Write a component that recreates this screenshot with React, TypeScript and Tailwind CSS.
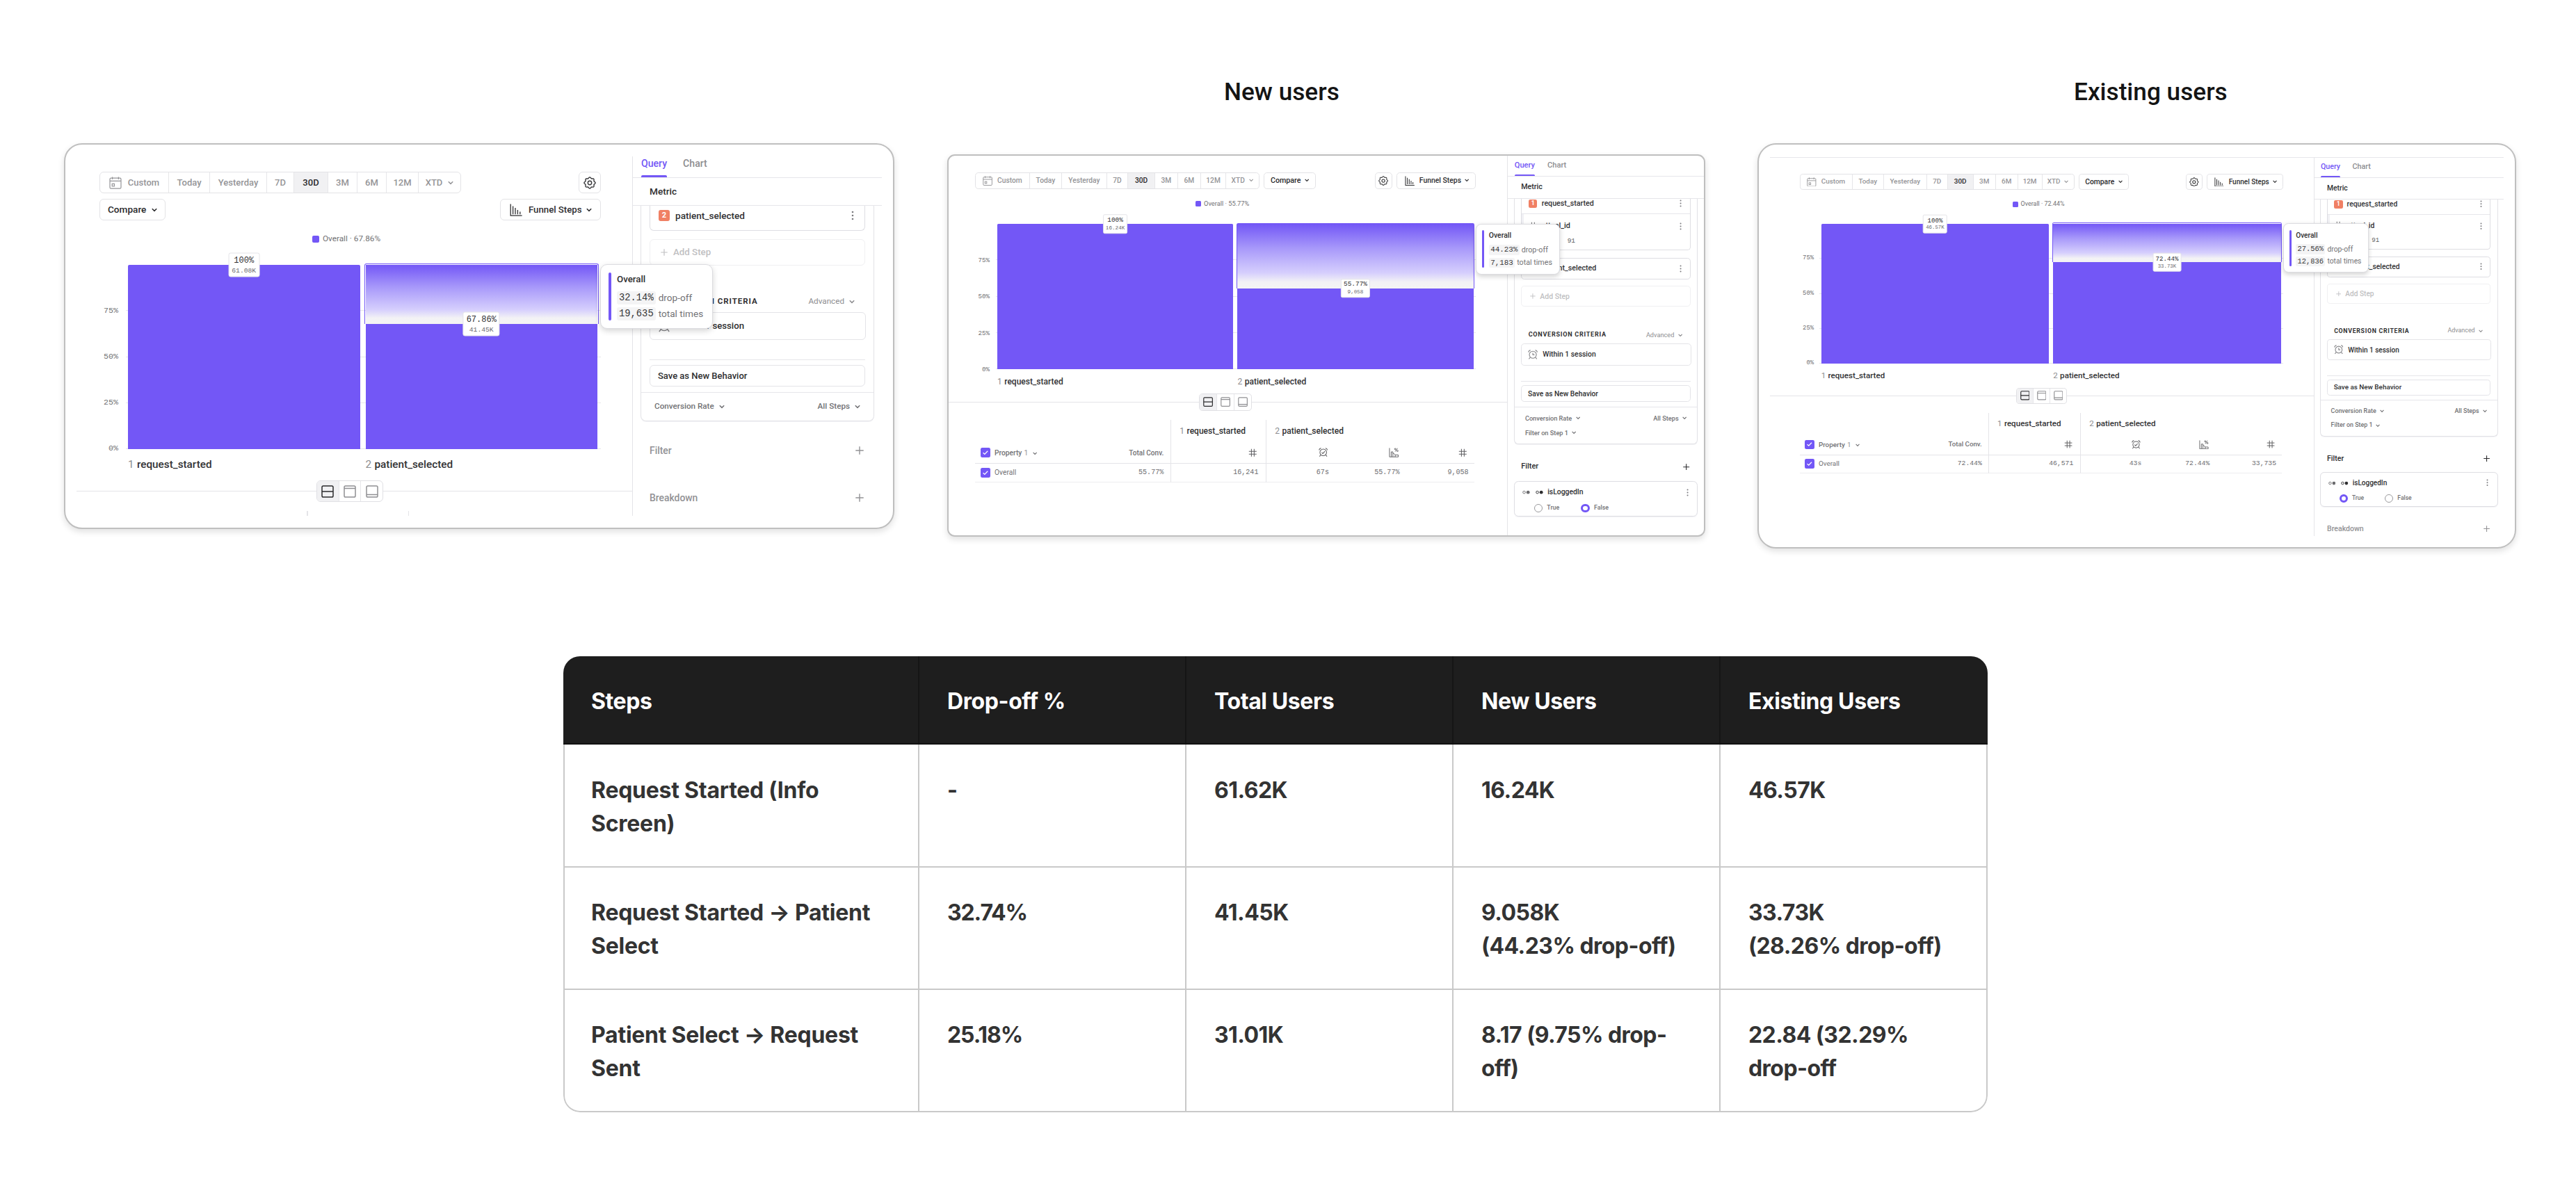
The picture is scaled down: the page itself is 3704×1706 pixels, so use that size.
import React from "react";

type Tone = { className?: string };

type Report = {
  overall: string;
  total: string;
  step2: string;
  dropPct: number;
  dropLabel: string;
  times: string;
};

/* ---------- icons ---------- */

const Chevron = ({ className = "" }: Tone) => (
  <svg viewBox="0 0 8 6" className={"h-[6px] w-[8px] shrink-0 " + className} fill="none" stroke="currentColor" strokeWidth="1.5">
    <path d="M0.8 1.2 4 4.4 7.2 1.2" />
  </svg>
);

const Calendar = () => (
  <svg viewBox="0 0 18 18" className="size-[18px] shrink-0" fill="none" stroke="currentColor" strokeWidth="1.2">
    <rect x="1" y="2.2" width="16" height="15" rx="1.6" />
    <path d="M1 6.4h16M4.6 0.4v3.6M13.4 0.4v3.6" />
    <rect x="4.2" y="10.4" width="3.2" height="3.4" />
  </svg>
);

const gearPath =
  Array.from({ length: 97 }, (_, i) => {
    const t = (i / 96) * Math.PI * 2;
    const r = 7.3 + 0.75 * Math.cos(8 * t);
    return `${i === 0 ? "M" : "L"}${(9 + r * Math.sin(t)).toFixed(2)} ${(9 - r * Math.cos(t)).toFixed(2)}`;
  }).join("") + "Z";

const Gear = () => (
  <svg viewBox="0 0 18 18" className="size-[18px]" fill="none" stroke="currentColor" strokeWidth="1.4" strokeLinejoin="round">
    <path d={gearPath} />
    <circle cx="9" cy="9" r="2.7" />
  </svg>
);

const FunnelBars = () => (
  <svg viewBox="0 0 18 18" className="size-[18px] shrink-0" fill="none" stroke="currentColor" strokeWidth="1.3">
    <path d="M1.2 0.6v16.6h16.4M4.6 3.6v11.6M8 6v9.2M11.4 9v6.2M14.8 11.4v3.8" />
  </svg>
);

const Dots = () => (
  <svg viewBox="0 0 4 14" className="h-[14px] w-[4px] shrink-0 text-[#7c7c80]" fill="currentColor">
    <circle cx="2" cy="2" r="1.3" />
    <circle cx="2" cy="7" r="1.3" />
    <circle cx="2" cy="12" r="1.3" />
  </svg>
);

const Plus = ({ className = "" }: Tone) => (
  <svg viewBox="0 0 12 12" className={"shrink-0 " + className} fill="none" stroke="currentColor" strokeWidth="1.4">
    <path d="M6 0.3v11.4M0.3 6h11.4" />
  </svg>
);

const Alarm = ({ check = false, className = "" }: Tone & { check?: boolean }) => (
  <svg viewBox="0 0 18 18" className={"shrink-0 " + className} fill="none" stroke="currentColor" strokeWidth="1.4">
    <circle cx="9" cy="9.2" r="6.4" />
    <path d="M1 4.8C1.2 2.6 2.6 1.2 4.8 1M17 4.8C16.8 2.6 15.4 1.2 13.2 1M4.2 14l-2.4 3M13.8 14l2.4 3" />
    <path d={check ? "M6 9.2l2.2 2.2L12.2 7" : "M9 5.6v3.8h3"} />
  </svg>
);

const Hash = () => (
  <svg viewBox="0 0 16 16" className="size-[16px]" fill="none" stroke="currentColor" strokeWidth="1.3">
    <path d="M5.6 1v14M10.6 1v14M1 5.4h14M1 10.6h14" />
  </svg>
);

const PercentChart = () => (
  <svg viewBox="0 0 18 18" className="size-[18px]" fill="none" stroke="currentColor" strokeWidth="1.2">
    <path d="M1.2 0.6v16.2h16.2M4.4 16.6V7.6h3v9M7.4 10.4h1.6l2.6 2.8h5.6v3.4M11.6 13.2v3.4" />
    <path d="M15.8 1l-4.2 6" />
    <circle cx="11.6" cy="2.4" r="1.2" />
    <circle cx="15.8" cy="5.8" r="1.2" />
  </svg>
);

const Pane = ({ line, className = "" }: Tone & { line: number }) => (
  <svg viewBox="0 0 18 18" className={"size-[18px] " + className} fill="none" stroke="currentColor" strokeWidth="1.5">
    <rect x="1" y="1" width="16" height="16" rx="1.8" />
    <path d={`M1 ${line}h16`} />
  </svg>
);

const BoolIcon = ({ className = "" }: Tone) => (
  <svg viewBox="0 0 14 8" className={"h-[8px] w-[14px] shrink-0 " + className}>
    <circle cx="3.2" cy="4" r="2.3" fill="none" stroke="currentColor" strokeWidth="1.2" />
    <circle cx="10.4" cy="4" r="3.1" fill="currentColor" />
  </svg>
);

const Check = () => (
  <span className="flex size-[18px] shrink-0 items-center justify-center rounded-[3px] bg-[#7357f6] text-white">
    <svg viewBox="0 0 10 8" className="h-[8px] w-[10px]" fill="none" stroke="currentColor" strokeWidth="1.6">
      <path d="M0.8 4.2 3.6 6.8 9.2 1" />
    </svg>
  </span>
);

/* ---------- toolbar ---------- */

const Toolbar = () => {
  const cell = "flex h-full items-center justify-center border-r border-[#e6e6e9]";
  return (
    <div className="flex h-[31px] w-[520px] shrink-0 overflow-hidden rounded-[6px] border border-[#e3e3e6] text-[13px] font-medium text-[#959598]">
      <div className={cell + " w-[99px] gap-[9px]"}>
        <Calendar />
        <span>Custom</span>
      </div>
      <div className={cell + " w-[59px]"}>Today</div>
      <div className={cell + " w-[82px]"}>Yesterday</div>
      <div className={cell + " w-[39px]"}>7D</div>
      <div className={cell + " w-[49px] bg-[#f1f1f3] text-[#2a2a2c]"}>30D</div>
      <div className={cell + " w-[42px]"}>3M</div>
      <div className={cell + " w-[42px]"}>6M</div>
      <div className={cell + " w-[46px]"}>12M</div>
      <div className="flex flex-1 items-center justify-center gap-[8px]">
        XTD <Chevron />
      </div>
    </div>
  );
};

const Compare = () => (
  <div className="flex h-[31px] w-[95px] shrink-0 items-center justify-between rounded-[6px] border border-[#e3e3e6] pl-[11px] pr-[11px] text-[13.6px] font-medium text-[#2a2a2c]">
    Compare <Chevron />
  </div>
);

const GearButton = () => (
  <div className="flex h-[31px] w-[32px] shrink-0 items-center justify-center rounded-[6px] border border-[#e3e3e6] text-[#3a3a3c]">
    <Gear />
  </div>
);

const FunnelButton = () => (
  <div className="flex h-[31px] w-[145px] shrink-0 items-center rounded-[6px] border border-[#e3e3e6] pl-[13px] text-[13.2px] font-medium text-[#2f2f31]">
    <FunnelBars />
    <span className="ml-[9px]">Funnel Steps</span>
    <Chevron className="ml-[7px]" />
  </div>
);

/* ---------- chart ---------- */

const Badge = ({ top, bottom }: { top: string; bottom: string }) => (
  <div className="absolute left-1/2 top-0 z-10 flex h-[35px] -translate-x-1/2 -translate-y-1/2 flex-col items-center justify-center rounded-[3px] border border-[#e4e4e8] bg-white px-[4px] font-['Liberation_Mono',monospace]">
    <span className="text-[12px] leading-[15px] text-[#303032]">{top}</span>
    <span className="text-[9.7px] leading-[13px] text-[#6c6c6f]">{bottom}</span>
  </div>
);

const Tip = ({ r }: { r: Report }) => (
  <div className="absolute left-full top-[-1px] z-30 ml-[4px] flex h-[93px] rounded-[10px] border border-[#dcdce0] bg-white py-[11px] pl-[11px] pr-[13px] shadow-[0_3px_9px_rgba(0,0,0,0.17)]">
    <div className="w-[4px] rounded-full bg-[#7357f6]" />
    <div className="ml-[8px] whitespace-nowrap text-[13.6px] text-[#737376]">
      <div className="mb-[7px] h-[20px] text-[13.3px] font-medium leading-[20px] text-[#2f2f31]">Overall</div>
      {[
        [r.dropLabel, "drop-off"],
        [r.times, "total times"],
      ].map(([v, l]) => (
        <div key={l} className="mb-[4px] flex h-[19px] items-center">
          <span className="rounded-[3px] bg-[#f4f4f5] px-[3px] font-['Liberation_Mono',monospace] text-[13.8px] leading-[19px] text-[#38383a]">{v}</span>
          <span className="ml-[4px]">{l}</span>
        </div>
      ))}
    </div>
  </div>
);

const StepName = ({ n, name }: { n: number; name: string }) => (
  <div className="flex text-[15.3px] font-medium text-[#323234]">
    <span className="w-[13px] font-normal text-[#8d8d90]">{n}</span>
    {name}
  </div>
);

const Chart = ({ r }: { r: Report }) => (
  <>
    <div className="flex h-[22px] items-center justify-center pr-[11px] text-[11.8px] text-[#717174]">
      <span className="mr-[5px] size-[10px] rounded-[2px] bg-[#7357f6]" />
      Overall · {r.overall}
    </div>
    <div className="mt-[26px] flex h-[265px] pr-[5px]">
      <div className="flex w-[41px] flex-col pr-[14px] font-['Liberation_Mono',monospace] text-[11.7px] text-[#717174]">
        {["75%", "50%", "25%", "0%"].map((t) => (
          <div key={t} className="flex flex-1 items-end justify-end">
            <span className="translate-y-1/2 leading-none">{t}</span>
          </div>
        ))}
      </div>
      <div className="relative flex flex-1 gap-[8px]">
        <div className="absolute inset-y-0 left-[-3px] right-[-5px] flex flex-col">
          {[0, 1, 2, 3].map((i) => (
            <div key={i} className="flex-1 border-b border-[#e6e6ea]" />
          ))}
        </div>
        <div className="relative flex-1 rounded-t-[2px] bg-[#7357f6]">
          <Badge top="100%" bottom={r.total} />
        </div>
        <div className="relative flex flex-1 flex-col">
          <div className="relative bg-white" style={{ height: `${r.dropPct}%` }}>
            <div className="absolute -inset-x-[2px] -top-[2px] bottom-0 rounded-t-[3px] border border-b-0 border-[#7357f6]" />
            <div className="h-full bg-[linear-gradient(to_bottom,#7357f6,#a899fa_38%,#d6cffd_76%,#f3f2f5_90%,#f4f4f4)]" />
          </div>
          <div className="relative flex-1 bg-[#7357f6]">
            <Badge top={r.overall} bottom={r.step2} />
          </div>
        </div>
        <Tip r={r} />
      </div>
    </div>
    <div className="flex h-[45px] gap-[8px] pl-[41px] pr-[5px] pt-[11px]">
      <div className="flex-1">
        <StepName n={1} name="request_started" />
      </div>
      <div className="flex-1">
        <StepName n={2} name="patient_selected" />
      </div>
    </div>
  </>
);

const Toggle = () => (
  <div className="flex h-[31px] w-[96px] overflow-hidden rounded-[6px] border border-[#e0e0e4] bg-white text-[#8f8f92]">
    <div className="flex flex-1 items-center justify-center border-r border-[#e6e6e9] bg-[#f1f1f3] text-[#2a2a2c]">
      <Pane line={9} />
    </div>
    <div className="flex flex-1 items-center justify-center border-r border-[#e6e6e9]">
      <Pane line={4.6} />
    </div>
    <div className="flex flex-1 items-center justify-center">
      <Pane line={13.4} />
    </div>
  </div>
);

const DataTable = ({ values }: { values: string[] }) => {
  const mono = "flex items-center justify-end font-['Liberation_Mono',monospace] text-[12.8px] text-[#6c6c6f]";
  const head = "flex items-center justify-end text-[#5e5e61]";
  return (
    <div className="grid w-[913px] grid-cols-[357px_174px_129px_129px_124px] grid-rows-[41px_39px_34px] text-[13px] font-medium text-[#727275]">
      <div />
      <div className="flex items-center border-l-2 border-[#e4e4e8] pl-[16px]">
        <StepName n={1} name="request_started" />
      </div>
      <div className="col-span-3 flex items-center border-l border-[#e4e4e8] pl-[16px]">
        <StepName n={2} name="patient_selected" />
      </div>
      <div className="flex items-center border-b border-[#e4e4e8] pl-[10px]">
        <Check />
        <span className="ml-[8px] mt-[2px]">Property</span>
        <span className="ml-[4px] mt-[2px] font-normal text-[#929295]">1</span>
        <Chevron className="ml-[9px] mt-[2px]" />
        <span className="ml-auto pr-[12px] text-[12.8px]">Total Conv.</span>
      </div>
      <div className={head + " border-b border-l-2 border-[#e4e4e8] pr-[15px]"}>
        <Hash />
      </div>
      <div className={head + " border-b border-l border-[#e4e4e8] pr-[15px]"}>
        <Alarm check className="size-[17px]" />
      </div>
      <div className={head + " border-b border-[#e4e4e8] pr-[15px]"}>
        <PercentChart />
      </div>
      <div className={head + " border-b border-[#e4e4e8] pr-[14px]"}>
        <Hash />
      </div>
      <div className="flex items-center border-b border-[#ededf0] pl-[10px]">
        <Check />
        <span className="ml-[8px] font-normal">Overall</span>
        <span className={mono + " ml-auto pr-[12px] font-normal"}>{values[0]}</span>
      </div>
      <div className={mono + " border-b border-l-2 border-b-[#ededf0] border-l-[#e4e4e8] pr-[13px] font-normal"}>{values[1]}</div>
      <div className={mono + " border-b border-l border-b-[#ededf0] border-l-[#e4e4e8] pr-[13px] font-normal"}>{values[2]}</div>
      <div className={mono + " border-b border-[#ededf0] pr-[13px] font-normal"}>{values[3]}</div>
      <div className={mono + " border-b border-[#ededf0] pr-[11px] font-normal"}>{values[4]}</div>
    </div>
  );
};

/* ---------- query panel ---------- */

const Tabs = () => (
  <div className="flex h-[30px] gap-[23px] text-[14.1px] font-medium leading-[20px] text-[#8d8d90]">
    <div className="flex flex-col justify-between text-[#7357f6]">
      <span>Query</span>
      <span className="h-[3px] rounded-t-[2px] bg-[#7357f6]" />
    </div>
    <span>Chart</span>
  </div>
);

const EventRow = ({ n, name }: { n: number; name: string }) => (
  <div className="flex items-center pl-[12px] pr-[15px]">
    <span className="flex size-[16px] items-center justify-center rounded-[3px] bg-[#f08064] text-[11px] font-bold text-white">{n}</span>
    <span className="ml-[8px] text-[13.6px] font-medium text-[#323234]">{name}</span>
    <span className="ml-auto">
      <Dots />
    </span>
  </div>
);

const SectionHead = ({ title, active = false }: { title: string; active?: boolean }) => (
  <div className="pb-[8px] pt-[24px]">
    <div
      className={
        "flex h-[36px] items-center justify-between pl-[24px] pr-[26px] text-[13.9px] font-medium " +
        (active ? "text-[#2a2a2c]" : "text-[#929295]")
      }
    >
      {title}
      <Plus className="size-[12px]" />
    </div>
  </div>
);

const Radio = ({ on, label, className = "" }: Tone & { on: boolean; label: string }) => (
  <div className={"flex items-center text-[11.2px] font-medium text-[#727275] " + className}>
    <span
      className={
        "mr-[8px] size-[16px] rounded-full " + (on ? "border-[5px] border-[#7357f6] bg-white" : "border border-[#9b9b9e]")
      }
    />
    {label}
  </div>
);

const Panel = ({ full, selected }: { full: boolean; selected?: "True" | "False" }) => (
  <div className="w-[358px] shrink-0 text-[#2f2f31]">
    <div className="border-b border-[#e6e6ea] pl-[12px]">
      <Tabs />
    </div>
    <div className="flex h-[40px] items-center border-b border-[#e6e6ea] pl-[24px] text-[13.6px] font-medium">Metric</div>
    <div className="ml-[11px] w-[336px] rounded-b-[8px] border border-t-0 border-[#e2e2e6] shadow-[0_1px_1px_rgba(40,40,80,0.06)]">
      <div className="px-[12px]">
        {full && (
          <div className="mb-[13px] h-[95px] rounded-b-[6px] border border-t-0 border-[#dedee3]">
            <div className="flex h-[29px] flex-col justify-center border-b border-[#e6e6ea] pb-[9px]">
              <EventRow n={1} name="request_started" />
            </div>
            <div className="flex h-[65px] pr-[15px]">
              <div className="h-[40px] w-[3px] bg-[#f1f1f5]" />
              <div className="flex-1 pl-[9px] pt-[11px]">
                <div className="flex h-[20px] items-center gap-[8px] text-[13.7px] font-medium">
                  <span className="text-[#6c6c6f]">
                    <Hash />
                  </span>
                  attual_id
                </div>
                <div className="mt-[9px] flex h-[18px] items-center gap-[10px] pl-[15px] font-['Liberation_Mono',monospace] text-[12px] text-[#5e5e61]">
                  <span className="w-[46px]">=</span>
                  <span>91</span>
                </div>
              </div>
              <div className="flex h-[20px] items-center pt-[22px]">
                <Dots />
              </div>
            </div>
          </div>
        )}
        <div
          className={
            "flex flex-col justify-center border-[#dedee3] " +
            (full ? "h-[40px] rounded-[6px] border" : "h-[36px] rounded-b-[6px] border border-t-0 pb-[6px]")
          }
        >
          <EventRow n={2} name="patient_selected" />
        </div>
        <div className="mt-[12px] flex h-[38px] items-center rounded-[6px] border border-[#f0f0f2] pl-[15px] text-[13.3px] font-medium text-[#bfbfc2]">
          <Plus className="mr-[8px] size-[10px]" />
          Add Step
        </div>
        <div className="mt-[36px] flex h-[31px] items-center pl-[13px] pr-[15px]">
          <span className="text-[11.5px] font-bold tracking-[0.95px]">CONVERSION CRITERIA</span>
          <span className="ml-auto text-[11.7px] text-[#8d8d90]">Advanced</span>
          <Chevron className="ml-[7px] text-[#8d8d90]" />
        </div>
        <div className="-mr-[1px] flex h-[40px] items-center rounded-[6px] border border-[#e4e4e8] pl-[11px] text-[13.2px] font-medium">
          <Alarm className="mr-[9px] size-[18px] text-[#858588]" />
          Within 1 session
        </div>
        <div className="mt-[28px] border-t border-[#e6e6ea] pt-[7px]">
          <div className="flex h-[31px] items-center rounded-[6px] border border-[#e4e4e8] pl-[11px] text-[13px] font-medium">
            Save as New Behavior
          </div>
        </div>
      </div>
      <div className="mt-[8px] border-t border-[#e6e6ea] pl-[19px] pr-[19px] text-[11.7px] font-medium text-[#727275]">
        <div className="flex h-[40px] items-center">
          Conversion Rate <Chevron className="ml-[7px]" />
          <span className="ml-auto">All Steps</span>
          <Chevron className="ml-[7px]" />
        </div>
        {full && (
          <div className="mb-[12px] flex h-[14px] items-center">
            Filter on Step 1 <Chevron className="ml-[6px]" />
          </div>
        )}
      </div>
    </div>
    <SectionHead title="Filter" active={full} />
    {full && (
      <div className="ml-[11px] h-[65px] w-[336px] rounded-[8px] border border-[#dedee3] shadow-[0_1px_1px_rgba(40,40,80,0.06)]">
        <div className="flex h-[38px] items-center pl-[14px] pr-[16px] text-[13.2px] font-medium">
          <BoolIcon className="mr-[10px] text-[#6c6c6f]" />
          <BoolIcon className="mr-[8px]" />
          isLoggedIn
          <span className="ml-auto">
            <Dots />
          </span>
        </div>
        <div className="flex h-[20px] items-center pl-[35px]">
          <Radio on={selected === "True"} label="True" className="w-[86px]" />
          <Radio on={selected === "False"} label="False" />
        </div>
      </div>
    )}
    {(!full || selected === "True") && <SectionHead title="Breakdown" />}
  </div>
);

/* ---------- cards ---------- */

const cardBase = "shrink-0 overflow-hidden border-2 border-[#bfbfbf] bg-white shadow-[0_4px_10px_rgba(0,0,0,0.12)]";

const AllUsersCard = () => (
  <div className={cardBase + " h-[555px] w-[1194px] rounded-[26px] pl-[16px] pt-[17px]"}>
    <div className="flex h-[517px] w-[1158px] overflow-hidden">
      <div className="w-[800px] shrink-0 border-r border-[#e4e4e8]">
        <div className="pl-[33px] pr-[45px] pt-[22px]">
          <div className="flex justify-between">
            <Toolbar />
            <GearButton />
          </div>
          <div className="mb-[16px] mt-[8px] flex justify-between">
            <Compare />
            <FunnelButton />
          </div>
          <Chart
            r={{ overall: "67.86%", total: "61.08K", step2: "41.45K", dropPct: 32.14, dropLabel: "32.14%", times: "19,635" }}
          />
        </div>
        <div className="grid grid-cols-[345px_96px_1fr]">
          <div className="my-auto h-px bg-[#e4e4e8]" />
          <Toggle />
          <div className="my-auto h-px bg-[#e4e4e8]" />
        </div>
        <div className="mt-[13px] flex h-[7px] pl-[331px]">
          <div className="w-[146px] border-l-2 border-[#e4e4e8]" />
          <div className="border-l border-[#e4e4e8]" />
        </div>
      </div>
      <Panel full={false} />
    </div>
  </div>
);

const Wide = ({ r, values }: { r: Report; values: string[] }) => (
  <>
    <div className="flex pb-[16px]">
      <Toolbar />
      <span className="w-[8px]" />
      <Compare />
      <span className="ml-auto flex gap-[8px]">
        <GearButton />
        <FunnelButton />
      </span>
    </div>
    <Chart r={r} />
    <div className="-ml-[60px] -mr-[57px] grid grid-cols-[470px_96px_1fr]">
      <div className="my-auto h-px bg-[#e4e4e8]" />
      <Toggle />
      <div className="my-auto h-px bg-[#e4e4e8]" />
    </div>
    <div className="h-[17px]" />
    <DataTable values={values} />
  </>
);

const NewUsersCard = () => (
  <div className={cardBase + " mt-[16px] h-[550px] w-[1090px] rounded-[11px]"}>
    <div className="flex h-[694px] w-[1380px] [zoom:0.787]">
      <div className="w-[1022px] shrink-0 border-r border-[#e4e4e8] pl-[48px] pr-[57px] pt-[30px]">
        <Wide
          r={{ overall: "55.77%", total: "16.24K", step2: "9,058", dropPct: 44.23, dropLabel: "44.23%", times: "7,183" }}
          values={["55.77%", "16,241", "67s", "55.77%", "9,058"]}
        />
      </div>
      <div className="pt-[7px]">
        <Panel full selected="False" />
      </div>
    </div>
  </div>
);

const ExistingUsersCard = () => (
  <div className={cardBase + " h-[583px] w-[1091px] rounded-[27px] pl-[16px] pt-[18px]"}>
    <div className="flex h-[717px] w-[1388px] overflow-hidden border-t border-[#e6e6ea] [zoom:0.76]">
      <div className="w-[1030px] shrink-0 border-r border-[#e4e4e8] pl-[56px] pr-[57px] pt-[30px]">
        <Wide
          r={{ overall: "72.44%", total: "46.57K", step2: "33.73K", dropPct: 27.56, dropLabel: "27.56%", times: "12,836" }}
          values={["72.44%", "46,571", "43s", "72.44%", "33,735"]}
        />
      </div>
      <div className="pt-[7px]">
        <Panel full selected="True" />
      </div>
    </div>
  </div>
);

/* ---------- summary table ---------- */

const rows: string[][][] = [
  [["Request Started (Info", "Screen)"], ["-"], ["61.62K"], ["16.24K"], ["46.57K"]],
  [["Request Started → Patient", "Select"], ["32.74%"], ["41.45K"], ["9.058K", "(44.23% drop-off)"], ["33.73K", "(28.26% drop-off)"]],
  [["Patient Select → Request", "Sent"], ["25.18%"], ["31.01K"], ["8.17 (9.75% drop-", "off)"], ["22.84 (32.29%", "drop-off"]],
];

const colStyle = [
  "pl-[38px] tracking-[-0.25px]",
  "border-l-2 border-[#c9c9c9] pl-[40px] tracking-[-1.1px]",
  "border-l-2 border-[#c9c9c9] pl-[40px]",
  "border-l-2 border-[#c9c9c9] pl-[40px]",
  "border-l-2 border-[#c9c9c9] pl-[40px]",
];

const Summary = () => (
  <div className="ml-[810px] mt-[156px] w-[2048px] overflow-hidden rounded-[24px] font-[Inter,sans-serif] text-[32px] font-bold leading-[48px] tracking-[-0.55px] text-[#333333]">
    <div className="grid h-[127px] grid-cols-[510px_384px_384px_384px_386px] border-b-2 border-[#111111] bg-[#1e1e1e] tracking-[-0.4px] text-white">
      {["Steps", "Drop-off %", "Total Users", "New Users", "Existing Users"].map((h, i) => (
        <div key={h} className={"whitespace-nowrap pt-[41px] " + (i === 0 ? "pl-[40px]" : "border-l-2 border-[#151515] pl-[40px]")}>
          {h}
        </div>
      ))}
    </div>
    <div className="overflow-hidden rounded-b-[24px] border-x-2 border-b-2 border-[#c9c9c9]">
      {rows.map((row, ri) => (
        <div key={ri} className={"grid grid-cols-[508px_384px_384px_384px_384px] " + (ri > 0 ? "h-[176px] border-t-2 border-[#c9c9c9]" : "h-[175px]")}>
          {row.map((lines, ci) => (
            <div key={ci} className={"whitespace-nowrap " + (ri > 0 ? "pt-[41px] " : "pt-[42px] ") + colStyle[ci]}>
              {lines.map((l) => (
                <div key={l}>{l}</div>
              ))}
            </div>
          ))}
        </div>
      ))}
    </div>
  </div>
);

export default function App() {
  return (
    <div className="h-[1706px] w-[3704px] overflow-hidden bg-white font-[Roboto,sans-serif]">
      <div className="flex h-[206px] pl-[1760px] pt-[111px] text-[35.2px] font-medium leading-[42px] text-[#141414]">
        <h2 className="w-[1222px]">New users</h2>
        <h2>Existing users</h2>
      </div>
      <div className="flex h-[582px] items-start pl-[92px]">
        <AllUsersCard />
        <div className="w-[76px] shrink-0" />
        <NewUsersCard />
        <div className="w-[75px] shrink-0" />
        <ExistingUsersCard />
      </div>
      <Summary />
    </div>
  );
}
